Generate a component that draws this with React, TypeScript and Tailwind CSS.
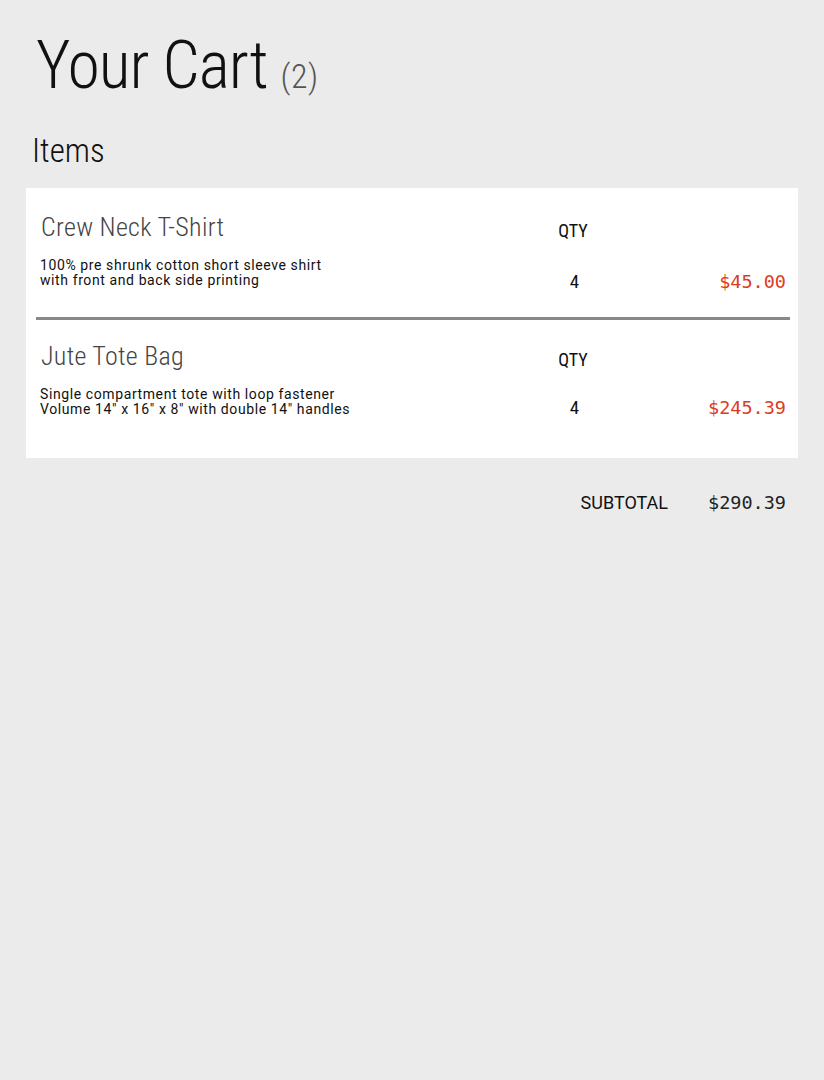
const items = [
  {
    name: "Crew Neck T-Shirt",
    lines: ["100% pre shrunk cotton short sleeve shirt", "with front and back side printing"],
    qty: 4,
    price: "$45.00",
  },
  {
    name: "Jute Tote Bag",
    lines: ["Single compartment tote with loop fastener", "Volume 14\u2033 x 16\u2033 x 8\u2033 with double 14\u2033 handles"],
    qty: 4,
    price: "$245.39",
  },
];

function CartItem({ item, first }: { item: (typeof items)[number]; first: boolean }) {
  return (
    <div className={`grid grid-cols-[1fr_60px_183px] pl-[14px] pr-[12px] ${first ? "pt-[26px] pb-[29px]" : "pt-[23px] pb-[41px]"}`}>
      <div className="text-[26px] leading-[26px] font-light [font-stretch:86%] tracking-[0.3px] text-[#444] pl-[1px]">{item.name}</div>
      <div className="text-[18px] leading-[18px] [font-stretch:80%] text-[#111] text-center self-end">QTY</div>
      <div />
      <div className="mt-[18px] text-[14px] leading-[15px] tracking-[0.6px] text-[#111]">
        {item.lines.map((l) => (
          <div key={l}>{l}</div>
        ))}
      </div>
      <div className={`self-end pl-[3px] text-[19px] leading-[19px] [font-stretch:85%] text-[#111] text-center ${first ? "-mb-[3px]" : "mb-0"}`}>
        {item.qty}
      </div>
      <div className={`self-end text-right font-['DejaVu_Sans_Mono',monospace] text-[18.5px] leading-[19px] text-[#dc3c1e] ${first ? "-mb-[3px]" : "mb-0"}`}>
        {item.price}
      </div>
    </div>
  );
}

export default function App() {
  return (
    <div className="min-h-screen bg-[#ebebeb] px-[26px] pt-[33px] font-['Roboto',sans-serif]">
      <h1 className="ml-[10px] flex items-baseline text-[66px] leading-[66px] font-light [font-stretch:75%] tracking-[-1px] text-[#111]">
        Your Cart
        <span className="ml-[13px] text-[34px] [font-stretch:80%] tracking-[0.5px] text-[#555]">(2)</span>
      </h1>
      <h2 className="mt-[25px] ml-[6px] text-[33px] leading-[33px] font-light [font-stretch:82%] text-[#111]">Items</h2>
      <div className="mt-[21px] bg-white">
        <CartItem item={items[0]} first />
        <div className="ml-[10px] mr-[8px] h-[3px] bg-[#888]" />
        <CartItem item={items[1]} first={false} />
      </div>
      <div className="mt-[35px] flex items-baseline justify-end pr-[12px]">
        <span className="text-[18px] leading-[18px] [font-stretch:88%] text-[#111]">SUBTOTAL</span>
        <span className="ml-[40px] font-['DejaVu_Sans_Mono',monospace] text-[18.5px] leading-[19px] text-[#222]">$290.39</span>
      </div>
    </div>
  );
}
